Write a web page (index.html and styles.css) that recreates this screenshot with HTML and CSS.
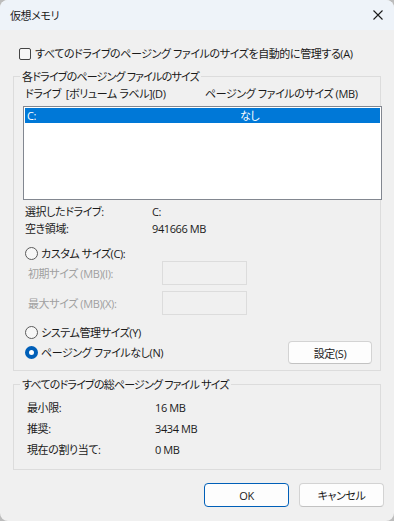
FILE: index.html
```html
<!DOCTYPE html>
<html lang="ja">
<head>
    <meta charset="UTF-8">
    <meta name="viewport" content="width=device-width, initial-scale=1.0">
    <title>仮想メモリ</title>
    <link rel="stylesheet" href="styles.css">
</head>
<body>

<div class="window">
    <div class="titlebar">
        <span class="title">仮想メモリ</span>
        <svg class="close" width="10" height="10" viewBox="0 0 10 10">
            <path d="M0.5 0.5 L9.5 9.5 M9.5 0.5 L0.5 9.5" stroke="#1b1b1b" stroke-width="1.1" fill="none"/>
        </svg>
    </div>

    <div class="content">
        <label class="check-row">
            <span class="checkbox"></span>
            <span>すべてのドライブのページング ファイルのサイズを自動的に管理する(A)</span>
        </label>

        <fieldset class="group">
            <legend><span class="legend-text">各ドライブのページング ファイルのサイズ</span></legend>
            <div class="col-head">
                <span class="col-drive">ドライブ&nbsp;&nbsp;[ボリューム ラベル](D)</span>
                <span>ページング ファイルのサイズ (MB)</span>
            </div>
            <div class="listbox">
                <div class="list-row selected">
                    <span class="cell-drive">C:</span>
                    <span>なし</span>
                </div>
            </div>
            <div class="info">
                <span>選択したドライブ:</span><span>C:</span>
                <span>空き領域:</span><span>941666 MB</span>
            </div>

            <div class="radio-row custom">
                <span class="radio"></span>
                <span>カスタム サイズ(C):</span>
            </div>
            <div class="field-row">
                <span class="field-label">初期サイズ (MB)(I):</span>
                <span class="field-input"></span>
            </div>
            <div class="field-row">
                <span class="field-label">最大サイズ (MB)(X):</span>
                <span class="field-input"></span>
            </div>
            <div class="radio-row system">
                <span class="radio"></span>
                <span>システム管理サイズ(Y)</span>
            </div>
            <div class="radio-row none">
                <span class="radio checked"></span>
                <span>ページング ファイルなし(N)</span>
                <button class="btn set-btn">設定(S)</button>
            </div>
        </fieldset>

        <fieldset class="group totals">
            <legend><span class="legend-text">すべてのドライブの総ページング ファイル サイズ</span></legend>
            <div class="total-grid">
                <span>最小限:</span><span>16 MB</span>
                <span>推奨:</span><span>3434 MB</span>
                <span>現在の割り当て:</span><span>0 MB</span>
            </div>
        </fieldset>

        <div class="actions">
            <button class="btn default">OK</button>
            <button class="btn">キャンセル</button>
        </div>
    </div>
</div>

</body>
</html>
```

FILE: styles.css
```css
body {
    margin: 0;
    padding: 0;
    background-color: #bcbcbc;
    font-family: "Open Sans", "Noto Sans CJK JP", sans-serif;
    font-size: 11px;
    letter-spacing: -0.4px;
    line-height: 17px;
    color: #1a1a1a;
    font-feature-settings: "palt";
}
.window {
    width: 394px;
    height: 521px;
    background-color: #f0f0f0;
    border-radius: 8px;
    overflow: hidden;
}
.titlebar {
    height: 30px;
    background-color: #eef3f9;
    display: flex;
    align-items: center;
    justify-content: space-between;
    padding: 0 11px 0 10px;
    box-sizing: border-box;
}
.content {
    padding: 15px 13px 0 13px;
}
/* checkbox line */
.check-row {
    display: flex;
    align-items: center;
    height: 17px;
    padding-left: 6px;
    gap: 4px;
    white-space: nowrap;
}
.checkbox {
    width: 10px;
    height: 10px;
    border: 1px solid #444;
    border-radius: 2px;
    background-color: #f7f7f7;
    flex-shrink: 0;
}
/* group boxes */
.group {
    margin: 6px 0 0 0;
    padding: 0 0 6px 9px;
    border: 1px solid #dcdcdc;
    min-width: 0;
}
.group legend {
    padding: 0 2px;
    margin-left: -3px;
    font-family: "Open Sans", "Noto Sans CJK JP", sans-serif;
    font-size: 11px;
    line-height: 17px;
}
.legend-text {
    font-feature-settings: "palt";
    letter-spacing: -0.8px;
}
.col-head {
    display: flex;
    padding-left: 2px;
    white-space: nowrap;
}
.col-drive {
    width: 180px;
}
.listbox {
    margin: 4px -2px 0 0;
    height: 90px;
    border: 1px solid #828790;
    background-color: #fff;
    padding: 1px;
}
.list-row {
    display: flex;
    height: 15px;
    line-height: 15px;
    padding-left: 2px;
}
.list-row.selected {
    background-color: #0078d7;
    color: #fff;
}
.cell-drive {
    width: 213px;
}
.info {
    display: grid;
    grid-template-columns: 127px auto;
    margin-top: 3px;
    padding-left: 2px;
}
.radio-row {
    display: flex;
    align-items: center;
    gap: 3px;
    padding-left: 2px;
}
.radio-row.custom {
    margin-top: 9px;
    height: 15px;
}
.radio-row.system {
    margin-top: 9px;
    height: 17px;
}
.radio-row.none {
    height: 23px;
}
.radio {
    width: 11px;
    height: 11px;
    border: 1px solid #5a5a5a;
    border-radius: 50%;
    background-color: #f7f7f7;
}
.radio.checked {
    width: 5px;
    height: 5px;
    border: 4px solid #005fb8;
    background-color: #fff;
}
.field-row {
    display: flex;
    align-items: center;
    height: 24px;
    padding-left: 5px;
}
.field-row + .field-row {
    margin-top: 6px;
}
.field-label {
    width: 134px;
    color: #a0a0a0;
}
.field-input {
    width: 83px;
    height: 22px;
    border: 1px solid #dcdcdc;
}
.btn {
    font-family: inherit;
    font-size: 11px;
    letter-spacing: -0.4px;
    font-feature-settings: "palt";
    color: #1a1a1a;
    background-color: #fdfdfd;
    border: 1px solid #d3d3d3;
    border-bottom-color: #c2c2c2;
    border-radius: 4px;
    height: 23px;
    padding: 0;
}
.set-btn {
    width: 84px;
    margin-left: auto;
    margin-right: 8px;
}
.totals {
    margin-top: 5px;
    padding: 4px 0 9px 9px;
}
.total-grid {
    display: grid;
    grid-template-columns: 128px auto;
    grid-auto-rows: 21px;
    align-items: center;
    padding-left: 4px;
}
.actions {
    display: flex;
    justify-content: flex-end;
    gap: 10px;
    margin: 13px -3px 0 0;
}
.actions .btn {
    width: 85px;
    height: 24px;
}
.actions .btn.default {
    border: 1px solid #005fb8;
}
```
